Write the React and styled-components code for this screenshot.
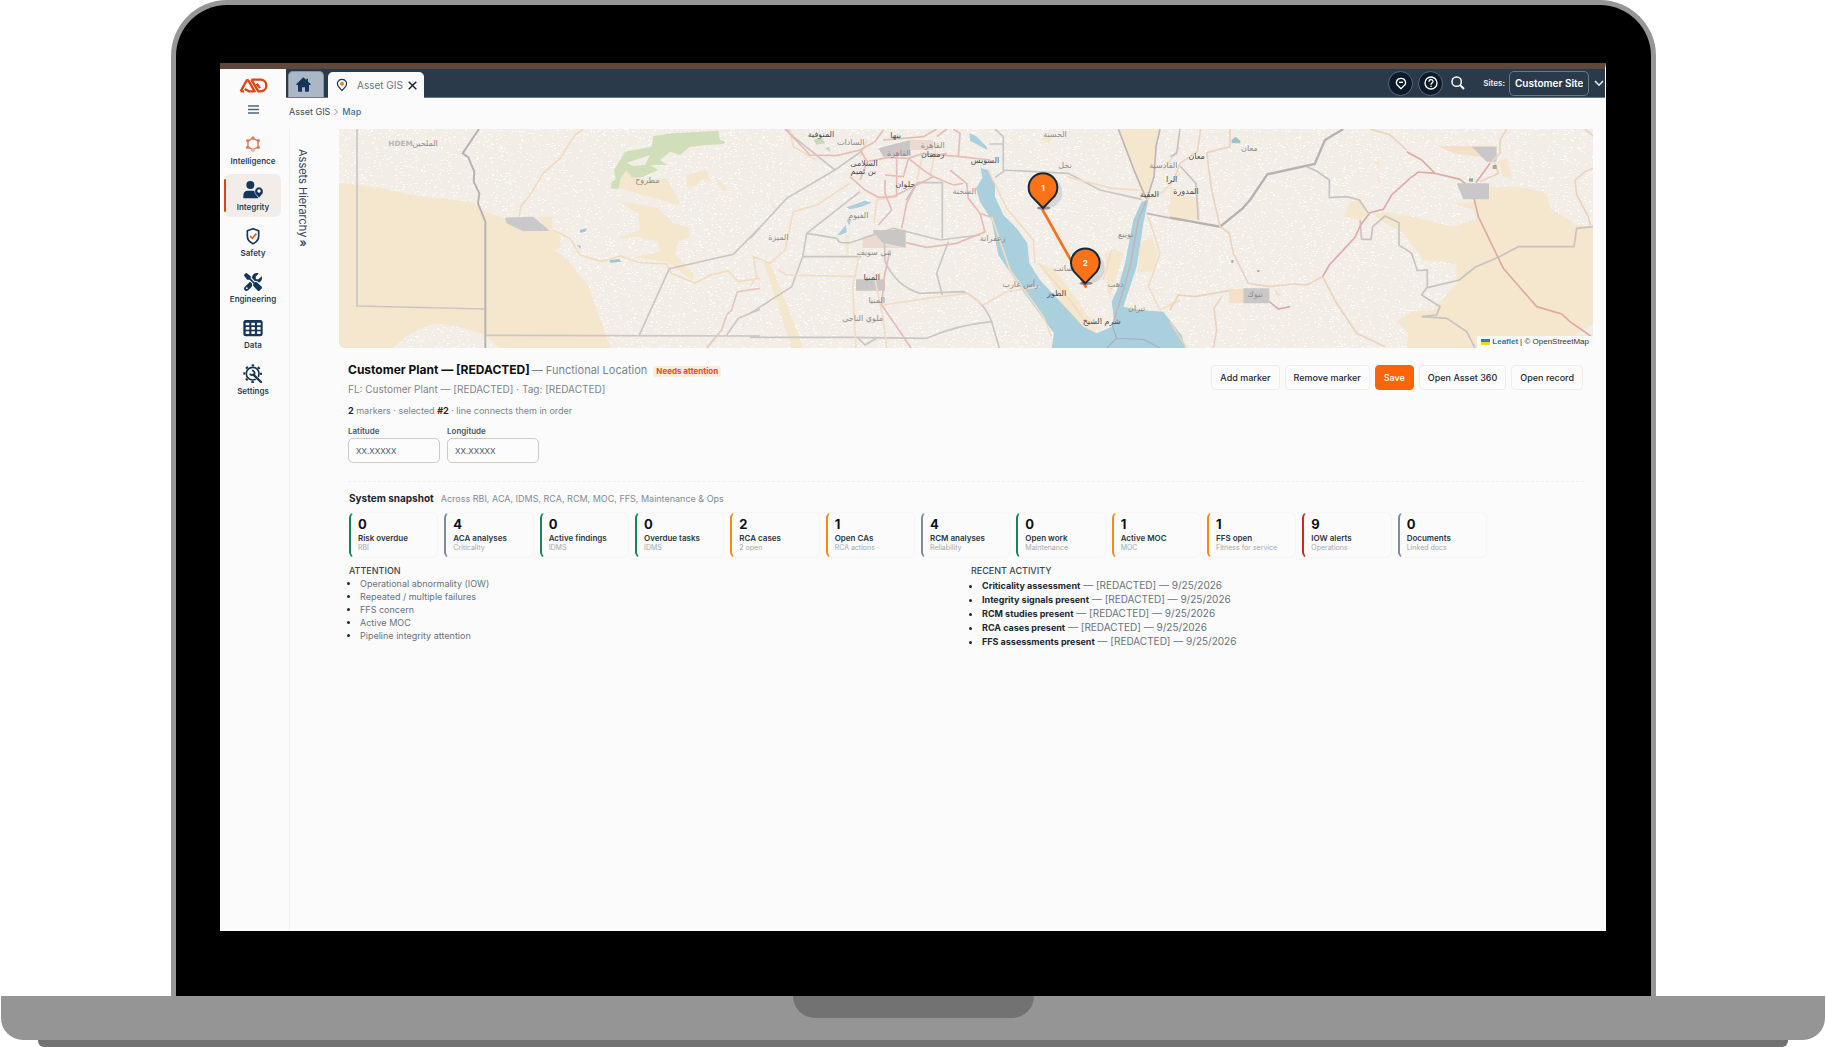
import React from "react";
import styled, { createGlobalStyle } from "styled-components";
import { FaScrewdriverWrench } from "react-icons/fa6";

const Global = createGlobalStyle`
  *, *::before, *::after { box-sizing: border-box; }
  body { margin: 0; background: #fff; font-family: Inter, "Open Sans", sans-serif; }
  button, input, select { font: inherit; }
  h1, h2, h3, p, ul { margin: 0; padding: 0; }
`;

/* ---------- laptop ---------- */
const Desk = styled.div`
  min-height: 100vh;
  display: flex;
  flex-direction: column;
  overflow: hidden;
`;
const Lid = styled.div`
  flex: 1;
  display: flex;
  margin: 0 170px 0 171px;
  padding: 58px 45px 65px 44px;
  background: #000;
  border: 5px solid #969696;
  border-bottom: 0;
  border-radius: 56px 56px 0 0;
`;
const Base = styled.div`
  height: 44px;
  margin: 0 1px;
  background: #959595;
  border-radius: 0 0 22px 22px;
  display: flex;
  justify-content: center;
`;
const Notch = styled.div`
  width: 241px;
  height: 22px;
  background: #727272;
  border-radius: 0 0 22px 22px;
`;
const Foot = styled.div`
  height: 7px;
  margin: 0 38px;
  background: #727272;
  border-radius: 0 0 6px 6px;
`;

/* ---------- application shell ---------- */
const Screen = styled.div`
  flex: 1;
  min-width: 0;
  display: flex;
  border-top: 6px solid #5f483b;
  border-right: 1px solid #fff;
  background: #fbfbfb;
  color: #22303c;
`;
const Sidebar = styled.aside`
  width: 66px;
  display: flex;
  flex-direction: column;
  align-items: center;
  padding-top: 9px;
`;
const MenuButton = styled.button`
  border: 0;
  background: none;
  padding: 0;
  margin: 12px 0 14px;
  height: 9px;
  display: flex;
`;
const Nav = styled.nav`
  display: grid;
  gap: 3px;
  width: 100%;
`;
const NavLink = styled.a`
  height: 43px;
  margin: 0 5px;
  position: relative;
  display: flex;
  flex-direction: column;
  align-items: center;
  gap: 1px;
  padding-top: 6px;
  border-radius: 6px;
  background: ${(p) => (p.$active ? "#f2ede8" : "none")};
  color: #2b3f54;
  font-size: 8px;
  line-height: 12px;
  font-weight: 600;
  text-decoration: none;
  svg { height: 20px; }
  &::before {
    content: "";
    display: ${(p) => (p.$active ? "block" : "none")};
    position: absolute;
    left: -1px;
    top: 5px;
    bottom: 5px;
    width: 2px;
    border-radius: 2px;
    background: #dc4414;
  }
`;
const Main = styled.main`
  flex: 1;
  min-width: 0;
  display: flex;
  flex-direction: column;
`;
const TopBar = styled.header`
  height: 29px;
  background: #2b3a4a;
  border-bottom: 1px solid #6d7782;
  display: flex;
  align-items: flex-end;
  gap: 4px;
  padding-left: 2px;
`;
const HomeTab = styled.button`
  width: 36px;
  height: 26px;
  border: 1px solid #8794a3;
  border-bottom: 0;
  border-radius: 5px 5px 0 0;
  background: #abb7c5;
  padding: 0 6px 0 0;
  display: flex;
  align-items: center;
  justify-content: center;
`;
const Tab = styled.div`
  height: 26px;
  margin-bottom: -1px;
  display: flex;
  align-items: center;
  padding: 0 7px 0 8px;
  background: #fbfbfb;
  border-radius: 5px 5px 0 0;
`;
const TabLink = styled.a`
  display: flex;
  align-items: center;
  gap: 9px;
  color: #6c7680;
  font-size: 10px;
  line-height: 14px;
  text-decoration: none;
`;
const IconButton = styled.button`
  width: ${(p) => (p.$ring ? 25 : 20)}px;
  height: 25px;
  padding: 0;
  border-radius: 50%;
  border: 1px solid ${(p) => (p.$ring ? "#5c6875" : "transparent")};
  background: ${(p) => (p.$ring ? "#0c1a2a" : "none")};
  display: flex;
  align-items: center;
  justify-content: center;
`;
const CloseButton = styled.button`
  border: 0;
  background: none;
  padding: 0;
  margin-left: 5px;
  display: flex;
`;
const Tools = styled.div`
  margin-left: auto;
  align-self: center;
  display: flex;
  align-items: center;
  gap: 5px;
`;
const SiteLabel = styled.label`
  display: flex;
  align-items: center;
  gap: 4px;
  margin-left: 10px;
  padding-right: 1px;
  color: #e9edf1;
  font-size: 8px;
  font-weight: 600;
  svg { margin-left: 1px; }
`;
const SiteSelect = styled.select`
  appearance: none;
  width: 80px;
  height: 25px;
  padding: 0 5px;
  border: 1px solid #6e7985;
  border-radius: 5px;
  background: #2b3a4a;
  color: #fff;
  font-size: 10px;
  font-weight: 600;
`;
const Crumbs = styled.nav`
  height: 31px;
  padding: 8px 0 0 3px;
  display: flex;
  gap: 4px;
  font-size: 9px;
  line-height: 12px;
  a { color: #3f4a55; text-decoration: none; }
  a:last-child { color: #2f76ad; font-weight: 500; }
`;
const Body = styled.div`
  flex: 1;
  display: flex;
  padding-right: 12px;
`;
const TreeHandle = styled.button`
  width: 50px;
  margin-left: 3px;
  padding: 20px 0 0 5px;
  border: 0;
  border-left: 1px solid #f2efec;
  background: none;
  color: #33475c;
  font-size: 11px;
  line-height: 16px;
  display: flex;
  flex-direction: column;
  justify-content: flex-start;
  align-items: flex-start;
`;
const TreeTitle = styled.span`
  writing-mode: vertical-rl;
`;
const TreeArrow = styled.span`
  width: 16px;
  line-height: 12px;
  font-size: 12px;
  font-weight: 600;
  text-align: center;
`;
const Content = styled.div`
  flex: 1;
  min-width: 0;
`;

/* ---------- map ---------- */
const MapFrame = styled.section`
  position: relative;
  height: 219px;
  overflow: hidden;
  border-radius: 0 0 6px 6px;
  background: #f2ede7;
`;
const MapDrawing = styled.svg`
  display: block;
  width: 100%;
  height: 100%;
`;
const Attribution = styled.div`
  position: absolute;
  right: 0;
  bottom: 0;
  height: 12px;
  padding: 0 4px;
  display: flex;
  align-items: center;
  gap: 2px;
  background: #fafafa;
  color: #333;
  font-family: "Liberation Sans", Arial, sans-serif;
  font-size: 8px;
  line-height: 12px;
  a { color: #2b7ba6; font-weight: 700; text-decoration: none; }
`;

/* ---------- record details ---------- */
const Details = styled.section`
  display: flex;
  justify-content: space-between;
  align-items: flex-start;
  margin: 0 9px;
  padding: 14px 0 18px;
  border-bottom: 1px dashed #f4efe9;
`;
const TitleRow = styled.div`
  display: flex;
  align-items: center;
  height: 16px;
`;
const Title = styled.h1`
  color: #0b0f14;
  font-size: 12px;
  line-height: 16px;
  font-weight: 700;
`;
const Kind = styled.span`
  margin-left: 2px;
  color: #7c858d;
  font-size: 11px;
`;
const Badge = styled.span`
  margin: 2px 0 0 6px;
  padding: 0 3px;
  border-radius: 3px;
  background: #f9ecdc;
  color: #e4530f;
  font-size: 8px;
  line-height: 11px;
  font-weight: 700;
`;
const Meta = styled.p`
  margin-top: ${(p) => p.$gap}px;
  color: #7c858d;
  font-size: ${(p) => p.$size}px;
  line-height: 14px;
  b { color: #1c2833; }
`;
const Fields = styled.div`
  display: flex;
  gap: 7px;
  margin-top: 7px;
`;
const Field = styled.label`
  display: grid;
  gap: 1px;
  width: 92px;
  color: #4b565f;
  font-size: 8px;
  line-height: 12px;
  font-weight: 600;
`;
const FieldInput = styled.input`
  width: 100%;
  height: 25px;
  padding: 0 7px;
  border: 1px solid #cfcac6;
  border-radius: 5px;
  background: #fcfcfc;
  color: #4b565f;
  font-size: 8px;
  font-weight: 400;
`;
const Actions = styled.div`
  display: flex;
  gap: 5px;
  margin: 3px 1px 0 0;
`;
const Action = styled.button`
  height: 25px;
  padding: 0 8px;
  border: 1px solid ${(p) => (p.$primary ? "#fb6507" : "#f1ece7")};
  border-radius: 4px;
  background: ${(p) => (p.$primary ? "#fb6507" : "#fcfcfc")};
  color: ${(p) => (p.$primary ? "#fff" : "#1d2731")};
  font-size: 9px;
  font-weight: 500;
  white-space: nowrap;
`;

/* ---------- snapshot ---------- */
const Snapshot = styled.section`
  padding: 9px 10px 0;
`;
const SnapshotHead = styled.div`
  display: flex;
  align-items: baseline;
  gap: 7px;
  color: #838b92;
  font-size: 9px;
  line-height: 14px;
  h2 { color: #1b2530; font-size: 10px; line-height: 14px; font-weight: 700; }
`;
const Cards = styled.div`
  display: grid;
  grid-template-columns: repeat(12, minmax(0, 1fr));
  gap: 6px;
  margin: 6px 96px 0 0;
`;
const tones = { green: "#14865a", slate: "#7f8c9b", orange: "#f58a16", red: "#cc2a1c" };
const Card = styled.article`
  height: 46px;
  padding: 4px 0 0 7px;
  border: 1px solid #f8f5f2;
  border-left: 2px solid ${(p) => tones[p.$tone]};
  border-radius: 6px;
  white-space: nowrap;
  strong { display: block; color: #0c1116; font-size: 13px; line-height: 14px; font-weight: 700; }
  h3 { margin-top: 3px; color: #2b3640; font-size: 8px; line-height: 9px; font-weight: 600; }
  p { color: #a3a9ae; font-size: 7px; line-height: 9px; }
`;
const Columns = styled.div`
  display: grid;
  grid-template-columns: 1fr 1fr;
  gap: 10px;
  margin-top: 6px;
`;
const ListTitle = styled.h3`
  color: #3b454e;
  font-size: 9px;
  line-height: 13px;
  font-weight: 500;
`;
const List = styled.ul`
  padding-left: 11px;
  color: #68727b;
  font-size: 9px;
  line-height: 13px;
  li::marker { color: #1c2833; }
`;
const ActivityList = styled(List)`
  padding-top: 1px;
  font-size: 10px;
  line-height: 14px;
  li { height: 14px; }
  b { color: #1c2833; font-size: 9px; font-weight: 700; }
`;

/* ---------- icons ---------- */
const NAVY = "#14365a";
const Logo = () => (
  <svg width="29" height="15" viewBox="0 0 87 45" fill="none" stroke="#dc4414" strokeWidth="7" strokeLinejoin="round">
    <path d="M5 40 L22 9 Q25 4 29 9 L47 40 H29 M15 40 H5 M17 33 L30 40" />
    <path d="M37 5 H64 C88 5 88 40 64 40 H58 L37 5 M53 17 L63 30" />
  </svg>
);
const MenuIcon = () => (
  <svg width="11" height="9" viewBox="0 0 11 9" stroke="#51657a" strokeWidth="1.3">
    <path d="M0 1H11M0 4.5H11M0 8H11" />
  </svg>
);
const IntelligenceIcon = () => (
  <svg width="16" viewBox="0 0 48 60" fill="#dc7a58" stroke="#dc7a58">
    <path d="M24 13 L39 21 V39 L24 47 L9 39 V21 Z" fill="none" strokeWidth="4" />
    {[[24, 12], [40, 20], [40, 40], [8, 20], [8, 40]].map(([x, y]) => (
      <circle key={x + "-" + y} cx={x} cy={y} r="4.5" />
    ))}
    <circle cx="24" cy="49" r="5" fill="#d9b9ad" stroke="#d9b9ad" />
  </svg>
);
const IntegrityIcon = () => (
  <svg width="20" viewBox="0 0 60 60" fill={NAVY}>
    <circle cx="22" cy="15" r="12" />
    <path d="M1 55 V47 Q1 32 15 32 H30 Q36 32 39 38 L46 55 Z" />
    <path d="M48 54 L37 41 C32 32 39 21 48 21 C57 21 64 32 59 41 Z" stroke="#f2ede8" strokeWidth="2" />
    <circle cx="48" cy="33" r="5" fill="#fff" />
  </svg>
);
const SafetyIcon = () => (
  <svg width="14" viewBox="0 0 42 60" fill="none">
    <path d="M21 8 L38 14 V30 C38 42 30 49 21 53 C12 49 4 42 4 30 V14 Z" stroke={NAVY} strokeWidth="5" strokeLinejoin="round" />
    <path d="M12 30 L19 37 L31 23" stroke="#ea5a1c" strokeWidth="5" />
  </svg>
);
const DataIcon = () => (
  <svg width="20" viewBox="0 0 60 60">
    <rect x="1" y="6" width="58" height="49" rx="7" fill={NAVY} />
    {[0, 1, 2].map((r) =>
      [0, 1, 2].map((c) => (
        <rect key={r + "" + c} x={8 + c * 17} y={14 + r * 13} width="11" height="8" rx="2" fill="#fbfbfb" />
      ))
    )}
  </svg>
);
const SettingsIcon = () => (
  <svg width="20" viewBox="0 0 60 60" fill="none" stroke={NAVY}>
    <circle cx="29" cy="29" r="19" strokeWidth="5" />
    <circle cx="29" cy="29" r="25" strokeWidth="6" strokeDasharray="7.6 12.03" strokeDashoffset="3.8" />
    <path d="M32 33 L54 54" strokeWidth="10" stroke="#fbfbfb" />
    <path d="M31 32 L54 54" strokeWidth="7" strokeLinecap="round" />
    <path d="M27 19 Q36 22 35 30 Q29 37 20 30" strokeWidth="5" />
  </svg>
);
const HomeIcon = () => (
  <svg width="15" height="15" viewBox="0 0 45 45" fill={NAVY}>
    <path d="M22 1 L1 21 Q0 24 3 24 H6 V41 Q6 44 9 44 H18 V31 H27 V44 H36 Q39 44 39 41 V24 H42 Q45 24 44 21 L36 14 V5 H31 V9 Z" />
  </svg>
);
const PinIcon = () => (
  <svg width="12" height="14" viewBox="0 0 36 42" fill="none">
    <path d="M18 38 L7 25 C0 14 8 4 18 4 C28 4 36 14 29 25 Z" stroke={NAVY} strokeWidth="3.6" />
    <circle cx="18" cy="17" r="6" fill="#f08020" />
  </svg>
);
const CloseIcon = () => (
  <svg width="9" height="9" viewBox="0 0 9 9" stroke="#14202c" strokeWidth="1.4">
    <path d="M0.7 0.7 8.3 8.3M8.3 0.7 0.7 8.3" />
  </svg>
);
const LocateIcon = () => (
  <svg width="12" height="13" viewBox="0 0 36 39" fill="none" stroke="#fff" strokeWidth="4">
    <path d="M18 35 L10 27 C-1 19 5 4 18 4 C31 4 37 19 26 27 Z" />
    <path d="M12 16 H24" />
  </svg>
);
const HelpIcon = () => (
  <svg width="14" height="14" viewBox="0 0 42 42" fill="none" stroke="#fff" strokeWidth="4">
    <circle cx="21" cy="21" r="18" />
    <path d="M15 17 C15 8 28 9 27 17 C26 21 21 21 21 26 M21 29 V33" />
  </svg>
);
const SearchIcon = () => (
  <svg width="14" height="14" viewBox="0 0 42 42" fill="none" stroke="#fff" strokeWidth="4.5">
    <circle cx="17" cy="17" r="14" />
    <path d="M27 27 L39 39" strokeWidth="6" />
  </svg>
);
const ChevronIcon = () => (
  <svg width="10" height="7" viewBox="0 0 10 7" fill="none" stroke="#e9edf1" strokeWidth="1.6">
    <path d="M1 1 5 5.2 9 1" />
  </svg>
);
const Flag = () => (
  <svg width="9" height="6" viewBox="0 0 9 6">
    <path fill="#3676c8" d="M0 0H9V3H0z" />
    <path fill="#ffd60a" d="M0 3H9V6H0z" />
  </svg>
);

/* Pale stipple that covers the land areas */
const stipple = (() => {
  let seed = 7;
  const next = () => (seed = (seed * 16807) % 2147483647) / 2147483647;
  let d = "";
  for (let i = 0; i < 15000; i++) {
    const x = Math.floor(next() * 1254) * 3;
    const y = Math.floor(next() * 219) * 3;
    const w = next() > 0.6 ? 6 : 3;
    d += `M${x} ${y}h${w}v3h-${w}z`;
  }
  return d;
})();

const label = (x, y, text, strong) => (
  <text key={x + text} x={x} y={y} textAnchor="middle" fontSize="24" fill={strong ? "#4c4c50" : "#8d8b8c"}>{text}</text>
);

const Pin = ({ x, y, n }) => (
  <g transform={`translate(${x} ${y})`}>
    <ellipse cx="14" cy="-46" rx="44" ry="46" fill="#8a94a0" opacity="0.25" />
    <ellipse cx="2" cy="0" rx="20" ry="5" fill="#46505a" opacity="0.6" />
    <path d="M0 0 L-34 -35 A43 43 0 1 1 34 -35 Z" fill="#fb7316" stroke="#14283c" strokeWidth="6" strokeLinejoin="round" />
    <text x="0" y="-51" textAnchor="middle" fontSize="24" fontWeight="700" fill="#fff" fontFamily="Inter">{n}</text>
  </g>
);

const MapView = () => (
  <MapDrawing viewBox="0 0 3762 657" preserveAspectRatio="xMidYMid slice" fontFamily='"DejaVu Sans", sans-serif' role="img" aria-label="Map">
    <path d={stipple} fill="#fdfcfb" />
    {/* western desert */}
    <g transform="translate(-27 -27)" fill="none" strokeWidth="5">
      <g fill="#f5e7ce">
        <path d="M27 188 L82 194 L165 207 L230 223 L350 238 L430 247 L465 275 L525 295 L665 332 L692 350 V384 L670 390 L715 420 L775 500 L842 684 H508 L467 645 L385 620 L310 610 L232 645 L190 684 H27 Z" />
        <path d="M885 140 L900 165 L950 180 L1010 175 L1050 250 L1040 254 L960 230 L870 205 L850 190 Z" />
        <path d="M856 240 L930 255 L985 265 L1030 310 L1075 322 L1080 352 L1045 365 L1035 405 L1090 460 L1088 480 L1050 455 L1010 425 L910 412 L990 395 L985 365 L925 350 L860 356 L930 330 L925 280 Z" />
        <path d="M1070 165 L1130 150 L1145 190 L1120 178 L1100 195 L1070 200 Z M1150 165 L1190 205 L1185 215 L1165 195 Z" />
        <path d="M620 290 H667 V330 L650 325 Z" />
      </g>
      <path fill="#d0dfb9" d="M885 95 L965 80 L970 48 L1030 40 L1165 32 L1170 60 L1188 66 L1180 72 L1130 75 L1080 80 L1050 105 L1020 95 L990 120 L1012 135 L960 135 L985 150 L935 172 L905 172 L888 150 L870 180 L865 208 L842 205 L845 185 L857 178 L852 150 Z" />
      <path fill="#f2ede7" d="M890 128 L930 115 L960 105 L945 135 L910 138 Z" />
      <path fill="#c9c8ca" d="M525 293 L610 290 L660 332 L580 334 L530 310 Z" />
      <path fill="#9cc6d6" d="M750 330 l20 -5 -4 10 -16 3z M740 375 l12 2 0 10z M838 421 l30 -4 6 8 -32 3z" />
      <path stroke="#f1ddbd" d="M760 27 L735 45 L690 115 L640 160 L600 225 L572 260 L568 290 M667 330 L720 355 L750 405 L815 425 L870 408 L930 428 L1010 432 L1025 460 L1095 490 L1140 465 L1195 453 L1225 485 L1290 475" />
      <path stroke="#b9b2b0" strokeWidth="6" d="M447 27 L398 100 L415 112 L433 155 L431 185 L448 220 L444 250 L466 305 V684" />
      <path stroke="#cbc5c3" d="M81 27 V558 L465 567 M467 646 L1290 648 M928 645 L1018 446 L1210 403 L1290 322 M1190 645 L1225 595 L1290 568" />
      <path stroke="#e6c8ba" d="M1130 684 L1175 630 L1190 585 L1205 570 L1222 515 L1290 505" />
      {label(285, 77, "الملحين", 0)}
      <text x="175" y="77" fontSize="22" fill="#b9b6b5" fontWeight="700">HDEM</text>
      {label(952, 190, "مطروح", 0)}
    </g>
    {/* delta, gulfs and peninsula */}
    <g transform="translate(1233 -27)" fill="none" strokeWidth="5">
      <g fill="#f5e7ce">
        <path d="M1105 27 H1230 L1218 80 L1215 170 L1190 235 L1170 210 L1130 90 Z" />
        <path d="M40 425 L60 430 L120 580 L160 684 H125 L85 560 Z" />
        <path d="M58 222 l22 52 -10 -10z M285 345 h12 v60 h-8z M865 430 L910 445 L975 530 L1030 610 L1060 628 L1010 632 L940 560 L905 490 Z" />
        <path d="M1165 375 L1205 350 L1222 400 L1212 455 L1165 455 Z M1078 540 L1120 400 L1095 385 L1065 400 L1070 500 Z M868 55 l42 -4 -15 20z" />
        <path d="M1290 232 L1250 260 L1262 292 L1290 298 Z" />
      </g>
      <g fill="#aacfdd">
        <path d="M692 145 L715 150 L735 190 V230 L760 285 L800 325 L832 370 L838 430 L870 480 L945 560 L1000 620 L1040 640 L1085 620 L1092 600 L1085 545 L1105 500 L1125 430 L1150 300 L1175 245 L1195 240 L1180 310 L1160 440 L1120 560 L1170 570 L1240 575 L1290 640 L1305 684 H905 L912 640 L820 515 L745 405 L725 300 L690 245 L678 205 L697 175 Z" />
        <path d="M658 40 L678 48 L710 80 L712 90 L660 62 Z M290 262 L345 242 L365 248 L330 262 L298 268 Z M290 300 l14 -4 -6 22z M262 345 l25 -30 4 22 -18 8z" />
      </g>
      <path fill="#c6dab6" d="M190 60 l25 -8 10 18 -25 4z M225 85 l12 -5 4 16z" />
      <g fill="#c9c6c6">
        <path d="M370 330 H467 V383 L400 370 L370 350 Z M318 478 H405 V512 H318 Z M385 85 L480 60 V105 L400 110 Z" />
        <path fill="#eadad0" d="M338 350 L375 340 L400 372 L467 384 H338 Z M480 60 h70 v30 h-70z" />
      </g>
      <g stroke="#c9c6c4">
        <path d="M340 90 L255 150 L110 235 L0 355 M330 215 L170 340 L158 410 L125 500 L0 580 M158 410 H335 M170 340 L262 355 M262 355 Q262 372 300 368 L430 325 L570 360 L690 345 M468 240 L502 188 H577 V355 M595 365 L560 460 L577 525 M405 425 Q440 500 510 520 L640 515 Q700 540 725 605 L748 684 M725 605 Q620 615 530 655 L310 652 H0 M110 27 L130 50 L255 150 M405 425 L403 340 M325 655 L345 675 L380 655" />
        <path d="M735 27 L760 50 V150 L955 160 L1050 210 L1175 238 M765 152 L735 172 M718 72 h40" />
      </g>
      <path stroke="#a7b4c2" strokeWidth="4" d="M1092 600 L1088 620 L1100 655 L1070 684 M1100 655 L1180 658 L1230 684" />
      <path stroke="#c1b5b8" d="M1230 27 L1218 80 L1212 170 L1190 240 L1165 300 L1140 440 L1105 560 L1092 600 M1105 27 L1150 145 L1188 235 M1190 280 L1290 300" />
      <g stroke="#f1dcc4">
        <path d="M120 27 L130 80 L200 120 M300 190 L200 255 L130 275 L105 390 L60 430 L10 410 L20 470 L0 500 M85 450 L110 465 L320 470 M330 395 L308 500 L318 684 M440 230 L380 240 L372 310 M715 150 L770 265 L850 360 L855 430 M725 290 L780 450 L880 590 L905 650 M400 555 L530 535 L650 520 L700 555 L770 515 L870 500 M865 430 L960 540 L1010 610 M1085 390 L1060 480 M1195 290 L1230 400 L1195 500 L1230 570 L1290 540 M1290 80 L1240 150 M1170 210 L1085 205 L950 170 M370 455 L400 600 L410 684 M520 100 L500 180 M560 70 L540 170 M350 60 L330 110 M1190 240 L1240 215 L1290 160" />
      </g>
      <g stroke="#e6bcb6">
        <path d="M105 27 L180 105 L260 107 L330 90 L375 65 L400 30 M300 170 L345 210 L385 232 L430 230 L480 205 L550 170 L610 195 L640 190 M330 90 L352 125 L330 180 M352 125 L415 112 L475 115 L520 100 L630 110 L720 120 M475 115 L520 150 L550 170 M610 27 L630 40 L625 110 M600 150 L650 190 L655 235 L690 280 L705 335 L620 370 L530 382 L467 368 M500 190 L470 250 L455 325 M405 180 V220 L425 270 L385 315 M420 390 L403 470 L395 555 L440 620 L483 684 M405 165 L460 170 L475 118 M400 60 L520 50 L560 27 M440 80 V230 M560 50 L590 27 M540 110 L590 100 M690 280 L720 290" />
      </g>
      {label(213, 52, "المنوفية", 1)}
      {label(302, 76, "السادات", 0)}
      {label(437, 54, "بنها", 1)}
      {label(447, 107, "القاهرة", 0)}
      {label(548, 85, "القاهرة", 0)}
      {label(548, 112, "رمضان", 1)}
      {label(342, 138, "السلامى", 1)}
      {label(340, 163, "بن ثميم", 1)}
      {label(466, 200, "حلوان", 1)}
      {label(705, 130, "السويس", 1)}
      {label(643, 222, "السخنة", 0)}
      {label(325, 294, "الفيوم", 0)}
      {label(85, 360, "الميزة", 0)}
      {label(372, 406, "بني سويف", 0)}
      {label(365, 480, "المنيا", 1)}
      {label(380, 550, "المنيا", 0)}
      {label(338, 604, "ملوي الناجي", 0)}
      {label(728, 362, "زعفرانة", 0)}
      {label(812, 500, "رأس غارب", 0)}
      {label(920, 527, "الطور", 1)}
      {label(940, 453, "سانت", 0)}
      {label(1055, 612, "شرم الشيخ", 1)}
      {label(1097, 500, "دهب", 0)}
      {label(1127, 350, "نويبع", 0)}
      {label(1160, 572, "تيران", 0)}
      {label(1198, 232, "العقبة", 1)}
      {label(945, 145, "نخل", 0)}
      {label(915, 52, "الحسنة", 0)}
      {label(1240, 144, "القادسية", 0)}
    </g>
    {/* northern arabia */}
    <g transform="translate(2493 -27)" fill="none" strokeWidth="5">
      <g fill="#f5e7ce">
        <path d="M0 195 L30 225 L85 235 L90 300 L0 290 Z" />
        <path d="M540 245 L570 240 L582 262 L590 290 L565 300 L522 290 Z M605 282 L650 275 L760 298 L850 320 L920 295 L900 250 L957 200 H1050 L1130 220 L1140 265 L1220 315 L1270 320 V684 H710 L715 640 L680 605 L725 575 L790 570 L860 490 V432 L760 420 L700 340 L640 305 Z" />
        <path d="M855 250 L915 245 V272 Z M985 125 L1010 112 L1028 180 L1000 170 Z M610 125 l18 -3 0 20z M620 165 l15 25 -12 -5z" />
        <path fill="#f3e0c6" d="M803 78 H975 V130 L940 112 L850 100 Z M178 508 H220 V549 H178 Z M312 505 l20 20 -12 5z" />
      </g>
      <path fill="#f2ede7" d="M1270 610 L1215 645 H1270 Z" />
      <g fill="#c9c7c8">
        <path d="M860 190 H957 V238 H880 Z M220 505 H298 V550 H220 Z M905 80 H980 V125 H950 Z" />
      </g>
      <path fill="#aacfdd" d="M0 615 L35 645 L45 684 H0 Z" />
      <path stroke="#b7b1b2" strokeWidth="7" d="M520 27 L465 60 L434 132 L292 163 L240 240 L218 265 L150 320 L0 293" />
      <path stroke="#c7c3c0" d="M410 140 L440 153 L478 180 V233 L530 230 L568 240 L595 280 M570 300 L575 358 H603 L608 320 L645 288 L687 308 V375 L725 400 L742 452 L772 450 V500 L755 525 L810 560 L800 585 L755 590 L830 595 L890 635 L915 684 M772 503 L868 480 L915 442 L985 412 L1045 380 H1212 L1220 325 L1270 320 M30 27 L20 100 L0 110 M30 138 L78 190 L85 300" />
      <g stroke="#ecd3bd">
        <path d="M92 27 L82 95 L30 130 L15 170 M180 27 V80 L110 98 L125 210 L150 320 L178 340 L190 400 L235 490 L300 500 L370 492 L410 495 L458 470 L500 550 L560 640 L645 680 M178 512 L75 530 L25 525 L0 570 M155 530 L132 565 L140 630 L130 684 M600 27 L660 45 L710 90 M1010 27 L990 60 V100 L960 130 M1245 27 L1270 48 M1270 145 L1245 155 L1215 180 L1220 225 L1255 290 L1262 320 M0 605 L50 684 M930 185 L985 160 L975 130" />
      </g>
      <path stroke="#dfa9a6" d="M710 95 L755 120 L795 160 L870 178 L885 190 M795 160 L745 156 L720 175 L665 225 L640 268 L600 278 L572 315 L555 352 L478 435 L458 470 M960 130 L918 188 M912 235 L925 290 L1000 445 L1100 560 L1175 582 L1200 605 L1262 648 M298 545 L325 567 L360 560" />
      {label(80, 116, "معان", 1)}
      {label(238, 93, "معان", 0)}
      {label(5, 186, "الرا", 1)}
      {label(48, 221, "المدورة", 1)}
      {label(255, 532, "تبوك", 0)}
      <path fill="#9cc3c9" d="M185 60 l12 -10 14 12 v8 h-26z" />
      <path fill="#a5a98f" d="M968 135 h12 v12 h-12z M897 175 h12 v10 h-12z M184 420 h6 v8 h-6z M262 450 h6 v6 h-6z" />
    </g>
    <g transform="translate(1233 -27)">
      <path d="M878 270 L1007 500" stroke="#f9701a" strokeWidth="8" strokeLinecap="round" />
      <Pin x={879} y={264} n="1" />
      <Pin x={1006} y={490} n="2" />
    </g>
  </MapDrawing>
);

/* ---------- data ---------- */
const navItems = [
  ["Intelligence", <IntelligenceIcon />],
  ["Integrity", <IntegrityIcon />, true],
  ["Safety", <SafetyIcon />],
  ["Engineering", <FaScrewdriverWrench size={18} color={NAVY} />],
  ["Data", <DataIcon />],
  ["Settings", <SettingsIcon />],
];
const cards = [
  ["0", "Risk overdue", "RBI", "green"],
  ["4", "ACA analyses", "Criticality", "slate"],
  ["0", "Active findings", "IDMS", "green"],
  ["0", "Overdue tasks", "IDMS", "green"],
  ["2", "RCA cases", "2 open", "orange"],
  ["1", "Open CAs", "RCA actions", "orange"],
  ["4", "RCM analyses", "Reliability", "slate"],
  ["0", "Open work", "Maintenance", "green"],
  ["1", "Active MOC", "MOC", "orange"],
  ["1", "FFS open", "Fitness for service", "orange"],
  ["9", "IOW alerts", "Operations", "red"],
  ["0", "Documents", "Linked docs", "slate"],
];
const attention = [
  "Operational abnormality (IOW)",
  "Repeated / multiple failures",
  "FFS concern",
  "Active MOC",
  "Pipeline integrity attention",
];
const activity = [
  "Criticality assessment",
  "Integrity signals present",
  "RCM studies present",
  "RCA cases present",
  "FFS assessments present",
];
const actions = ["Add marker", "Remove marker", "Save", "Open Asset 360", "Open record"];

export default function App() {
  return (
    <Desk>
      <Global />
      <Lid>
        <Screen>
          <Sidebar>
            <Logo />
            <MenuButton aria-label="Menu"><MenuIcon /></MenuButton>
            <Nav>
              {navItems.map(([name, icon, active]) => (
                <NavLink key={name} href="#" $active={active}>
                  {icon}
                  {name}
                </NavLink>
              ))}
            </Nav>
          </Sidebar>
          <Main>
            <TopBar>
              <HomeTab aria-label="Home"><HomeIcon /></HomeTab>
              <Tab>
                <TabLink href="#"><PinIcon />Asset GIS</TabLink>
                <CloseButton aria-label="Close tab"><CloseIcon /></CloseButton>
              </Tab>
              <Tools>
                <IconButton $ring aria-label="Locate"><LocateIcon /></IconButton>
                <IconButton $ring aria-label="Help"><HelpIcon /></IconButton>
                <IconButton aria-label="Search"><SearchIcon /></IconButton>
                <SiteLabel>
                  Sites:
                  <SiteSelect><option>Customer Site</option></SiteSelect>
                  <ChevronIcon />
                </SiteLabel>
              </Tools>
            </TopBar>
            <Crumbs>
              <a href="#">Asset GIS</a>
              <svg width="4" height="12" viewBox="0 0 4 12" fill="none" stroke="#8c959d"><path d="M0.5 3 3.5 6 0.5 9" /></svg>
              <a href="#">Map</a>
            </Crumbs>
            <Body>
              <TreeHandle>
                <TreeTitle>Assets Hierarchy</TreeTitle>
                <TreeArrow>»</TreeArrow>
              </TreeHandle>
              <Content>
                <MapFrame>
                  <MapView />
                  <Attribution>
                    <Flag />
                    <a href="#">Leaflet</a>
                    <span>| © OpenStreetMap</span>
                  </Attribution>
                </MapFrame>
                <Details>
                  <div>
                    <TitleRow>
                      <Title>Customer Plant — [REDACTED]</Title>
                      <Kind>— Functional Location</Kind>
                      <Badge>Needs attention</Badge>
                    </TitleRow>
                    <Meta $gap={4} $size={10}>FL: Customer Plant — [REDACTED] · Tag: [REDACTED]</Meta>
                    <Meta $gap={8} $size={9}><b>2</b> markers · selected <b>#2</b> · line connects them in order</Meta>
                    <Fields>
                      <Field>Latitude<FieldInput defaultValue="XX.XXXXX" /></Field>
                      <Field>Longitude<FieldInput defaultValue="XX.XXXXX" /></Field>
                    </Fields>
                  </div>
                  <Actions>
                    {actions.map((a) => <Action key={a} $primary={a === "Save"}>{a}</Action>)}
                  </Actions>
                </Details>
                <Snapshot>
                  <SnapshotHead>
                    <h2>System snapshot</h2>
                    <span>Across RBI, ACA, IDMS, RCA, RCM, MOC, FFS, Maintenance &amp; Ops</span>
                  </SnapshotHead>
                  <Cards>
                    {cards.map(([value, name, note, tone]) => (
                      <Card key={name} $tone={tone}>
                        <strong>{value}</strong>
                        <h3>{name}</h3>
                        <p>{note}</p>
                      </Card>
                    ))}
                  </Cards>
                  <Columns>
                    <div>
                      <ListTitle>ATTENTION</ListTitle>
                      <List>{attention.map((t) => <li key={t}>{t}</li>)}</List>
                    </div>
                    <div>
                      <ListTitle>RECENT ACTIVITY</ListTitle>
                      <ActivityList>
                        {activity.map((t) => <li key={t}><b>{t}</b> — [REDACTED] — 9/25/2026</li>)}
                      </ActivityList>
                    </div>
                  </Columns>
                </Snapshot>
              </Content>
            </Body>
          </Main>
        </Screen>
      </Lid>
      <Base><Notch /></Base>
      <Foot />
    </Desk>
  );
}
